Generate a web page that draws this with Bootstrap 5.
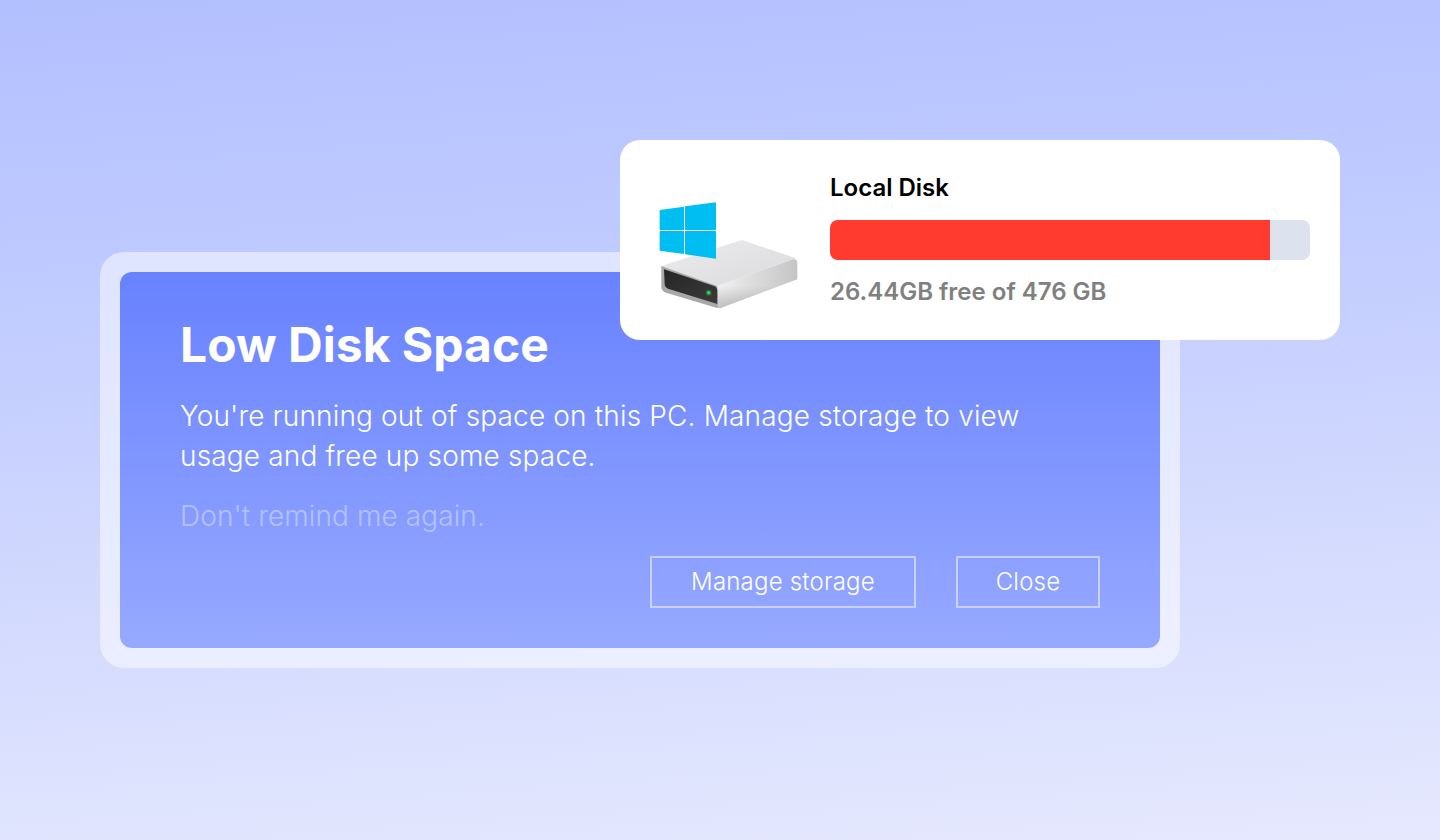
<!DOCTYPE html>
<html lang="en">
<head>
    <meta charset="UTF-8">
    <title>Low Disk Space</title>
    <link href="https://cdn.jsdelivr.net/npm/bootstrap@5.3.0/dist/css/bootstrap.min.css" rel="stylesheet">
    <script src="https://cdn.jsdelivr.net/npm/bootstrap@5.3.0/dist/js/bootstrap.bundle.min.js"></script>
    <style>
        body {
            height: 100vh;
            overflow: hidden;
            padding: 252px 0 0 100px;
            font-family: Inter, "Liberation Sans", sans-serif;
            background: linear-gradient(176deg, #b3c0ff 0%, #bfcaff 30%, #d5dcfe 70%, #e6e9fe 100%);
        }
        .dialog-frame {
            position: relative;
            width: 1080px;
            height: 416px;
            padding: 20px;
            border-radius: 24px;
            background: rgba(255, 255, 255, .5);
        }
        .dialog-box {
            height: 100%;
            padding: 44px 60px 40px;
            border-radius: 12px;
            color: #fff;
            background: linear-gradient(180deg, #6882ff 0%, #97a9ff 100%);
        }
        .dialog-title {
            margin: 0 0 22px;
            font-size: 48px;
            line-height: 58px;
            font-weight: 700;
        }
        .dialog-text {
            margin: 0 0 20px;
            font-size: 28px;
            line-height: 40px;
            font-weight: 300;
            letter-spacing: .16px;
        }
        .dialog-mute {
            margin: 0 0 20px;
            font-size: 28px;
            line-height: 40px;
            font-weight: 300;
            letter-spacing: .1px;
            color: rgba(255, 255, 255, .4);
        }
        .dialog-actions {
            gap: 40px;
        }
        .dialog-btn {
            width: 144px;
            height: 52px;
            padding: 0;
            border: 2px solid rgba(255, 255, 255, .5);
            border-radius: 0;
            color: #fff;
            font-size: 24px;
            line-height: 46px;
            font-weight: 300;
            letter-spacing: .2px;
        }
        .dialog-btn-wide {
            width: 266px;
        }
        .disk-card {
            position: absolute;
            left: 520px;
            top: -112px;
            width: 720px;
            height: 200px;
            padding: 0 30px 0 20px;
            border-radius: 20px;
            background: #fff;
        }
        .disk-icon {
            width: 180px;
            height: 140px;
            margin-top: 40px;
            flex: none;
        }
        .disk-info {
            padding: 33px 0 0 10px;
        }
        .disk-name {
            font-size: 24px;
            line-height: 30px;
            font-weight: 600;
            color: #000;
            margin-bottom: 17px;
        }
        .disk-bar {
            height: 40px;
            border-radius: 8px;
            background: #dce3ee;
        }
        .disk-fill {
            background: #ff3b30;
            border-radius: 8px 0 0 8px;
        }
        .disk-free {
            margin-top: 17px;
            font-size: 24px;
            line-height: 30px;
            font-weight: 600;
            color: #808080;
        }
    </style>
</head>
<body>
    <div class="dialog-frame">
        <div class="dialog-box">
            <h1 class="dialog-title">Low Disk Space</h1>
            <p class="dialog-text">You're running out of space on this PC. Manage storage to view<br>usage and free up some space.</p>
            <p class="dialog-mute">Don't remind me again.</p>
            <div class="d-flex justify-content-end dialog-actions">
                <button type="button" class="btn dialog-btn dialog-btn-wide">Manage storage</button>
                <button type="button" class="btn dialog-btn">Close</button>
            </div>
        </div>

        <div class="disk-card d-flex">
            <svg class="disk-icon" viewBox="0 0 540 420" aria-hidden="true">
                <defs>
                    <linearGradient id="topFace" x1="0" y1="0" x2="1" y2="1">
                        <stop offset="0" stop-color="#ececee"/>
                        <stop offset="1" stop-color="#dadadc"/>
                    </linearGradient>
                    <linearGradient id="sideFace" x1="0" y1="0" x2="1" y2="0">
                        <stop offset="0" stop-color="#f0f0f0"/>
                        <stop offset=".5" stop-color="#dadada"/>
                        <stop offset="1" stop-color="#c4c4c4"/>
                    </linearGradient>
                    <linearGradient id="sideShade" x1="0" y1="0" x2="0" y2="1">
                        <stop offset=".55" stop-color="#808080" stop-opacity="0"/>
                        <stop offset="1" stop-color="#808080" stop-opacity=".45"/>
                    </linearGradient>
                    <linearGradient id="frontFace" x1="0" y1="0" x2="1" y2="1">
                        <stop offset="0" stop-color="#262626"/>
                        <stop offset="1" stop-color="#3a3a3a"/>
                    </linearGradient>
                </defs>
                <!-- drive -->
                <path d="M64 258 L305 180 L468 235 L232 318 Z" fill="url(#topFace)"/>
                <path d="M232 318 L462 237 Q472 238 472 250 L472 298 L240 385 Q234 386 234 375 Z" fill="url(#sideFace)"/>
                <path d="M232 318 L462 237 Q472 238 472 250 L472 298 L240 385 Q234 386 234 375 Z" fill="url(#sideShade)"/>
                <path d="M64 258 L232 318 L234 385 L78 338 Q64 332 64 320 Z" fill="#a8a8a8"/>
                <path d="M72 268 L222 318 Q232 322 232 332 L232 372 L84 326 Q74 322 74 312 Z" fill="url(#frontFace)"/>
                <circle cx="206" cy="338" r="9" fill="#34c759" opacity=".35"/>
                <circle cx="206" cy="338" r="5" fill="#22e04a"/>
                <!-- windows logo -->
                <path d="M59 90 L132 80 L132 150 L59 150 Z" fill="#00bdf2"/>
                <path d="M135 79 L228 67 L228 150 L135 150 Z" fill="#00bdf2"/>
                <path d="M59 153 L132 153 L132 222 L59 212 Z" fill="#00bdf2"/>
                <path d="M135 153 L228 153 L228 236 L135 223 Z" fill="#00bdf2"/>
            </svg>
            <div class="disk-info flex-grow-1">
                <div class="disk-name">Local Disk</div>
                <div class="disk-bar d-flex">
                    <div class="disk-fill" style="width: 91.67%"></div>
                </div>
                <div class="disk-free">26.44GB free of 476 GB</div>
            </div>
        </div>
    </div>
</body>
</html>
